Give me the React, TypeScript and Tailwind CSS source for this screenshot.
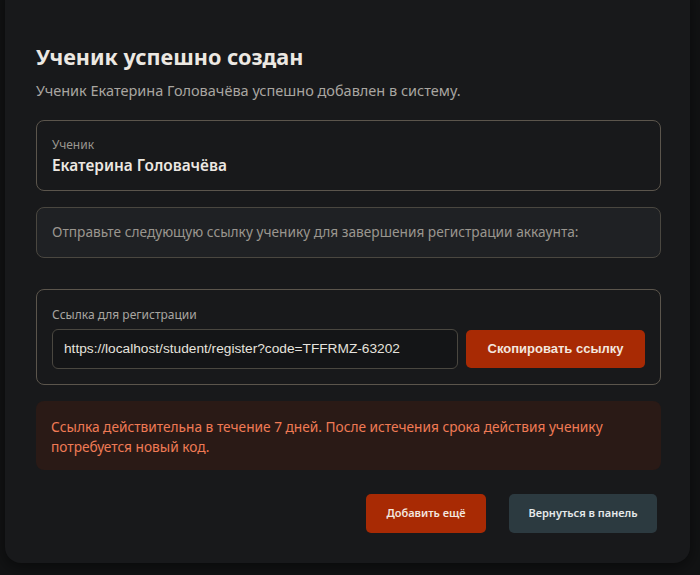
import React from "react";

export default function App() {
  return (
    <div className="h-[575px] w-[700px] overflow-hidden bg-[#121314] font-['Noto_Sans',sans-serif]">
      <div className="-mt-[20px] ml-[5px] w-[685px] rounded-[16px] bg-[#18191b] pb-[30px] pl-[31px] pr-[29px] pt-[62px] shadow-[0_4px_16px_rgba(0,0,0,0.5)]">
        <h1 className="text-[21.6px] font-bold leading-[30px] text-[#ece8e2]">Ученик успешно создан</h1>
        <p className="mt-[8px] text-[14.5px] leading-[20px] text-[#a9a6a1]">
          Ученик Екатерина Головачёва успешно добавлен в систему.
        </p>

        <div className="mt-[20px] h-[71px] rounded-[8px] border border-[#5b554c] px-[15px] pt-[15px]">
          <div className="text-[12px] leading-[17px] text-[#9a968f]">Ученик</div>
          <div className="mt-[2px] text-[15.4px] font-semibold leading-[22px] text-[#ece8e2]">Екатерина Головачёва</div>
        </div>

        <div className="mt-[16px] flex h-[51px] items-center rounded-[8px] border border-[#4a4740] bg-[#1f2124] px-[15px]">
          <p className="text-[13.7px] text-[#9a968f]">
            Отправьте следующую ссылку ученику для завершения регистрации аккаунта:
          </p>
        </div>

        <div className="mt-[31px] h-[96px] rounded-[8px] border border-[#5b554c] px-[15px] pt-[16px]">
          <div className="text-[12px] leading-[17px] text-[#a9a6a1]">Ссылка для регистрации</div>
          <div className="mt-[6px] flex items-center gap-[8px]">
            <div className="flex h-[40px] w-[406px] items-center rounded-[6px] border border-[#4a4740] bg-[#141517] px-[11px] font-['Liberation_Sans',sans-serif] text-[13.7px] text-[#e6e3de]">
              https://localhost/student/register?code=TFFRMZ-63202
            </div>
            <button className="flex h-[38px] w-[179px] items-center justify-center rounded-[5px] bg-[#a82a04] font-['Liberation_Sans',sans-serif] text-[13px] font-bold text-[#f3e6df]">
              Скопировать ссылку
            </button>
          </div>
        </div>

        <div className="mt-[16px] h-[69px] rounded-[8px] bg-[#2a1a16] px-[15px] pt-[16px] text-[13.7px] leading-[20px] text-[#f07a55]">
          Ссылка действительна в течение 7 дней. После истечения срока действия ученику потребуется новый код.
        </div>

        <div className="mt-[24px] flex justify-end gap-[23px] pr-[4px]">
          <button className="h-[39px] w-[120px] rounded-[5px] bg-[#a82a04] text-[11px] font-semibold text-[#f3e6df]">
            Добавить ещё
          </button>
          <button className="h-[39px] w-[148px] rounded-[5px] bg-[#2c3a40] text-[11px] font-semibold text-[#e6e9ea]">
            Вернуться в панель
          </button>
        </div>
      </div>
    </div>
  );
}
